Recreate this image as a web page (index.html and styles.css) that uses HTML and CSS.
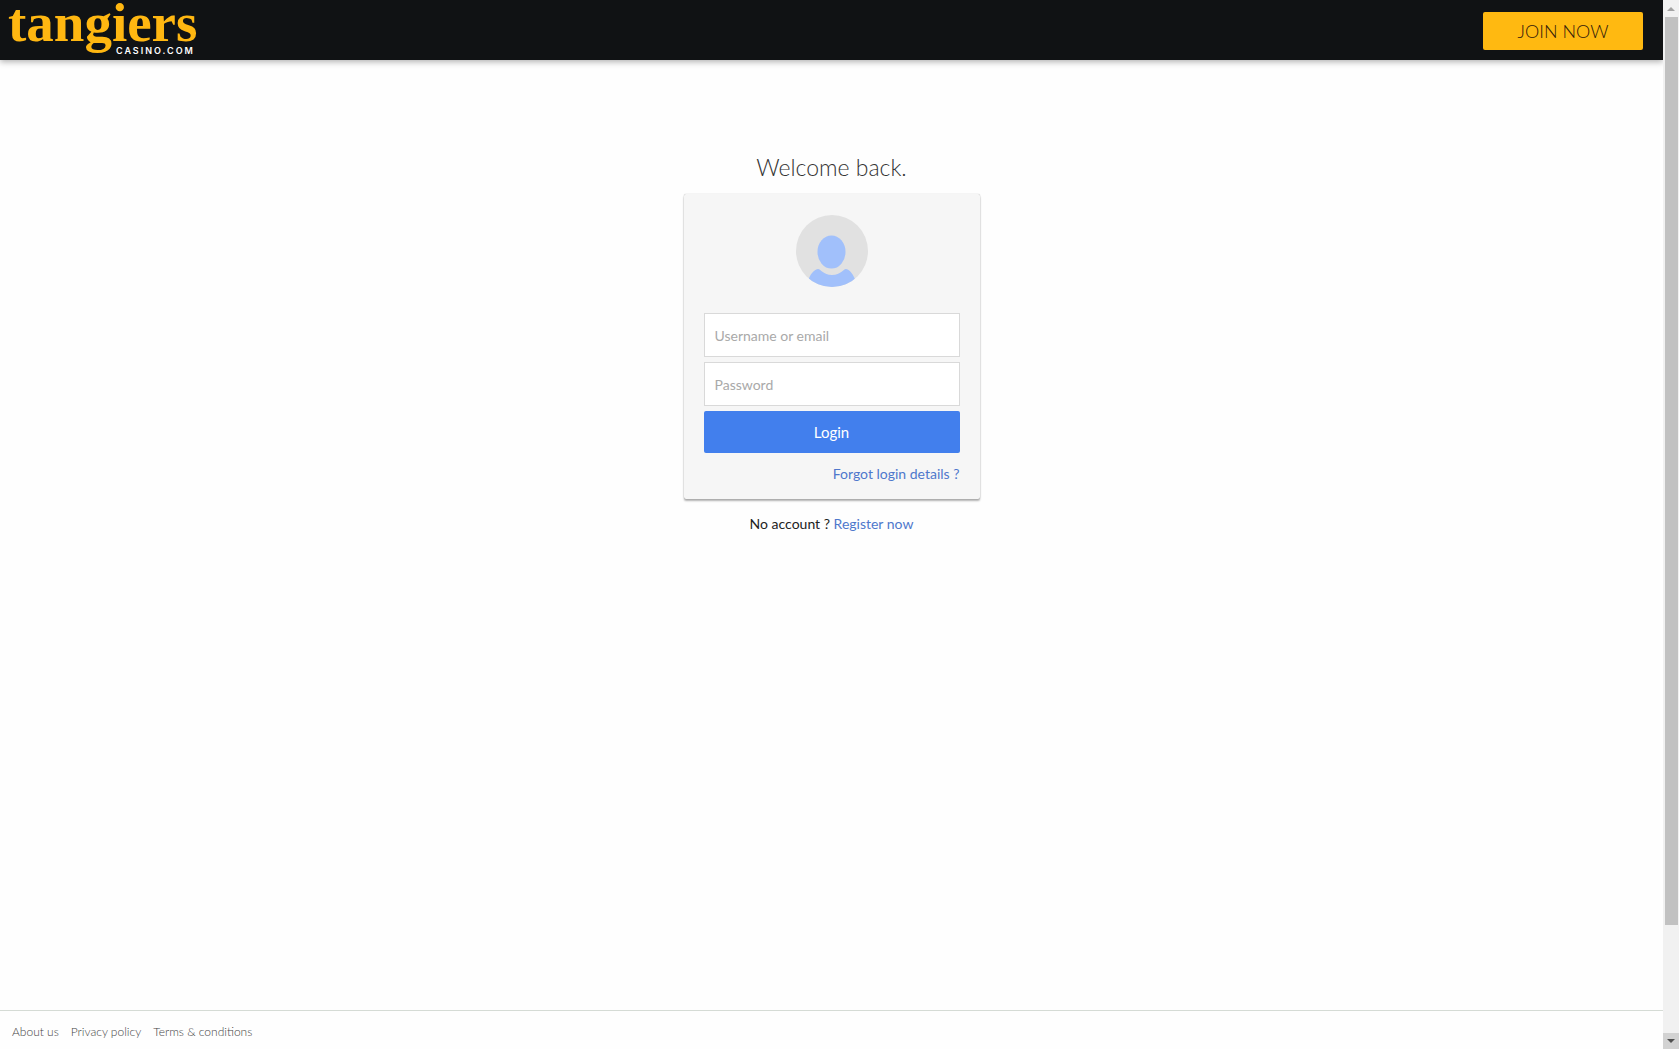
FILE: index.html
```html
<!DOCTYPE html>
<html lang="en">
<head>
<meta charset="utf-8">
<meta name="viewport" content="width=device-width, initial-scale=1">
<title>Tangiers Casino - Login</title>
<link rel="stylesheet" href="styles.css">
</head>
<body>
<div class="page">
  <header class="topbar">
    <a class="logo" href="#">
      <svg width="200" height="60" viewBox="0 0 200 60">
        <text class="logo-name" x="8" y="41">tangiers</text>
        <text class="logo-sub" x="116" y="54">CASINO.COM</text>
      </svg>
    </a>
    <button class="join" type="button">JOIN NOW</button>
  </header>
  <main class="content">
    <h1 class="title">Welcome back.</h1>
    <form class="card">
      <svg class="avatar" viewBox="0 0 72 72" aria-hidden="true">
        <defs><clipPath id="disc"><circle cx="36" cy="36" r="36"/></clipPath></defs>
        <circle cx="36" cy="36" r="36" fill="#e1e1e1"/>
        <g clip-path="url(#disc)" fill="#a1c0fb">
          <ellipse cx="35.500" cy="37" rx="14" ry="16.500"/>
          <path d="M12 66C14 60 17 55 22 54C25 54 27 60 36 60C45 60 47 54 50 54C55 55 57 60 60 66V72H12Z"/>
        </g>
      </svg>
      <input class="field" type="text" placeholder="Username or email" aria-label="Username or email">
      <input class="field" type="password" placeholder="Password" aria-label="Password">
      <button class="login" type="submit">Login</button>
      <a class="forgot" href="#">Forgot login details ?</a>
    </form>
    <p class="register">No account ? <a href="#">Register now</a></p>
  </main>
  <footer class="footer">
    <a href="#">About us</a>
    <a href="#">Privacy policy</a>
    <a href="#">Terms &amp; conditions</a>
  </footer>
</div>
<div class="scrollbar" aria-hidden="true">
  <svg class="arrow" viewBox="0 0 16 16"><path d="M4 11L8 7L12 11Z" fill="#a3a3a3"/></svg>
  <div class="track"><div class="thumb"></div></div>
  <svg class="arrow arrow-down" viewBox="0 0 16 16"><path d="M4 6H12L8 10Z" fill="#505050"/></svg>
</div>
</body>
</html>
```
FILE: styles.css
```css
* { box-sizing: border-box; }

body {
  display: flex;
  height: 100vh;
  margin: 0;
  background: #fefefe;
  color: #222;
  font: 14px/20px Lato, sans-serif;
}

a { color: #4f78cc; text-decoration: none; }

.page {
  display: flex;
  flex: 1;
  flex-direction: column;
}

.topbar {
  display: flex;
  align-items: flex-start;
  justify-content: space-between;
  height: 60px;
  padding-right: 20px;
  background: #101214;
  box-shadow: 0 2px 6px rgba(0, 0, 0, .3);
}

.logo svg { display: block; overflow: visible; }

.logo-name {
  fill: #ffb711;
  font: bold 55px "Liberation Serif", serif;
}

.logo-sub {
  fill: #fff;
  font: 600 9px Inter, sans-serif;
  letter-spacing: 2px;
}

.join {
  width: 160px;
  height: 38px;
  margin-top: 12px;
  border: 0;
  border-radius: 2px;
  background: #ffb911;
  color: #32190a;
  font: 300 18px/20px Lato, sans-serif;
}

.content {
  display: flex;
  flex: 1;
  flex-direction: column;
  align-items: center;
  padding-top: 92px;
}

.title {
  margin: 0 0 12px;
  color: #333;
  font-size: 23px;
  font-weight: 300;
  line-height: 30px;
}

.card {
  display: flex;
  flex-direction: column;
  gap: 5px;
  width: 296px;
  padding: 21px 20px 15px;
  border-radius: 2px;
  background: #f6f6f6;
  box-shadow: 0 0 1px rgba(0, 0, 0, .35), 0 2px 2px rgba(0, 0, 0, .3);
}

.avatar {
  align-self: center;
  width: 72px;
  height: 72px;
  margin-bottom: 21px;
}

.field {
  height: 44px;
  padding: 0 10px;
  border: 1px solid #d9d9d9;
  background: #fff;
  font: 14px/20px Lato, sans-serif;
}

.field::placeholder { color: #a9a9a9; }

.login {
  height: 42px;
  border: 0;
  border-radius: 2px;
  background: #427fed;
  color: #fff;
  font: 15px/20px Lato, sans-serif;
}

.forgot {
  align-self: flex-end;
  margin-top: 6px;
}

.register { margin: 15px 0 0; }

.footer {
  display: flex;
  gap: 12px;
  padding: 11px 12px 7px;
  border-top: 1px solid #d5dbd5;
  font-size: 12px;
  font-weight: 300;
}

.footer a { color: #444; }

.scrollbar {
  display: flex;
  flex-direction: column;
  width: 16px;
  background: #f1f1f1;
}

.arrow { height: 16px; }

.arrow-down { background: #d2d2d2; }

.track { flex: 1; padding: 1px 1px 0 2px; }

.thumb { height: 894px; height: calc(89% + 4px); background: #c1c1c1; }
```
